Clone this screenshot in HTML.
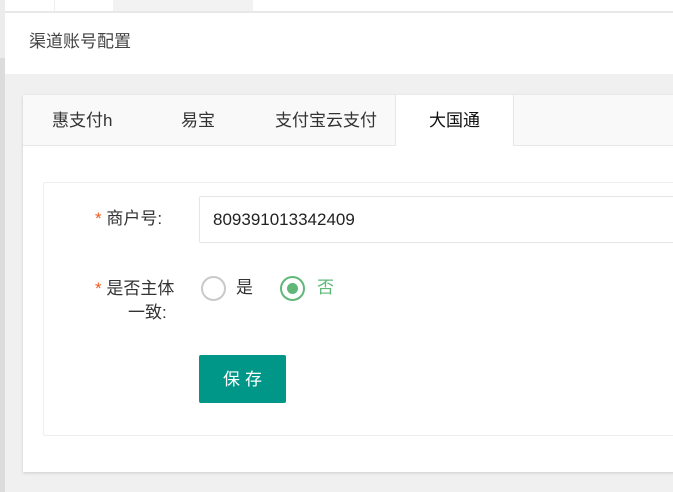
<!DOCTYPE html>
<html><head><meta charset="utf-8"><style>
*{margin:0;padding:0;box-sizing:border-box}
body{width:673px;height:492px;overflow:hidden;background:#f0f0f0;font-family:"Liberation Sans","Noto Sans CJK SC",sans-serif;position:relative;color:#333}
.a{position:absolute;line-height:1}
</style></head><body>
<div class="a" style="left:0;top:0;width:5px;height:492px;background:#dcdcdc"></div>
<div class="a" style="left:0;top:0;width:5px;height:58px;background:#ececec"></div>
<div class="a" style="left:5px;top:0;width:668px;height:11px;background:#fff"></div>
<div class="a" style="left:54px;top:0;width:1px;height:11px;background:#eee"></div>
<div class="a" style="left:113px;top:0;width:140px;height:11px;background:#f2f2f2"></div>
<div class="a" style="left:5px;top:11px;width:668px;height:2px;background:#e8e8e8"></div>
<div class="a" style="left:5px;top:13px;width:668px;height:61px;background:#fff"></div>
<div class="a" style="left:29px;top:33px;font-size:17px;color:#444">渠道账号配置</div>
<div class="a" style="left:23px;top:95px;width:660px;height:377px;background:#fff;box-shadow:0 1px 3px rgba(0,0,0,.15)"></div>
<div class="a" style="left:23px;top:95px;width:650px;height:51px;background:#f9f9f9;border-bottom:1px solid #e8e8e8"></div>
<div class="a" style="left:395px;top:95px;width:119px;height:51px;background:#fff;border-left:1px solid #e6e6e6;border-right:1px solid #e6e6e6"></div>
<div class="a" style="left:52px;top:112px;font-size:17px">惠支付h</div>
<div class="a" style="left:181px;top:112px;font-size:17px">易宝</div>
<div class="a" style="left:275px;top:112px;font-size:17px">支付宝云支付</div>
<div class="a" style="left:429px;top:112px;font-size:17px;color:#111">大国通</div>
<div class="a" style="left:43px;top:182px;width:640px;height:254px;border:1px solid #eee;border-radius:2px"></div>
<div class="a" style="left:95px;top:210px;font-size:17px"><span style="color:#f05a1e">*</span> 商户号:</div>
<div class="a" style="left:199px;top:196px;width:480px;height:47px;border:1px solid #e6e6e6;border-radius:2px;font-size:17px;padding:14px 0 0 13px;color:#222">809391013342409</div>
<div class="a" style="left:95px;top:276px;font-size:17px;line-height:25px"><span style="color:#f05a1e">*</span> 是否主体</div>
<div class="a" style="left:128px;top:300px;font-size:17px;line-height:25px">一致:</div>
<div class="a" style="left:201px;top:276px;width:25px;height:25px;border:2px solid #c9c9c9;border-radius:50%"></div>
<div class="a" style="left:236px;top:279px;font-size:17px">是</div>
<div class="a" style="left:280px;top:276px;width:25px;height:25px;border:2px solid #5fb878;border-radius:50%"></div>
<div class="a" style="left:287px;top:283px;width:11px;height:11px;background:#5fb878;border-radius:50%"></div>
<div class="a" style="left:317px;top:279px;font-size:17px;color:#5fb878">否</div>
<div class="a" style="left:199px;top:355px;width:87px;height:48px;background:#009688;border-radius:2px;color:#fff;font-size:17px;text-align:center;line-height:50px;letter-spacing:5px;padding-left:5px">保存</div>
</body></html>
